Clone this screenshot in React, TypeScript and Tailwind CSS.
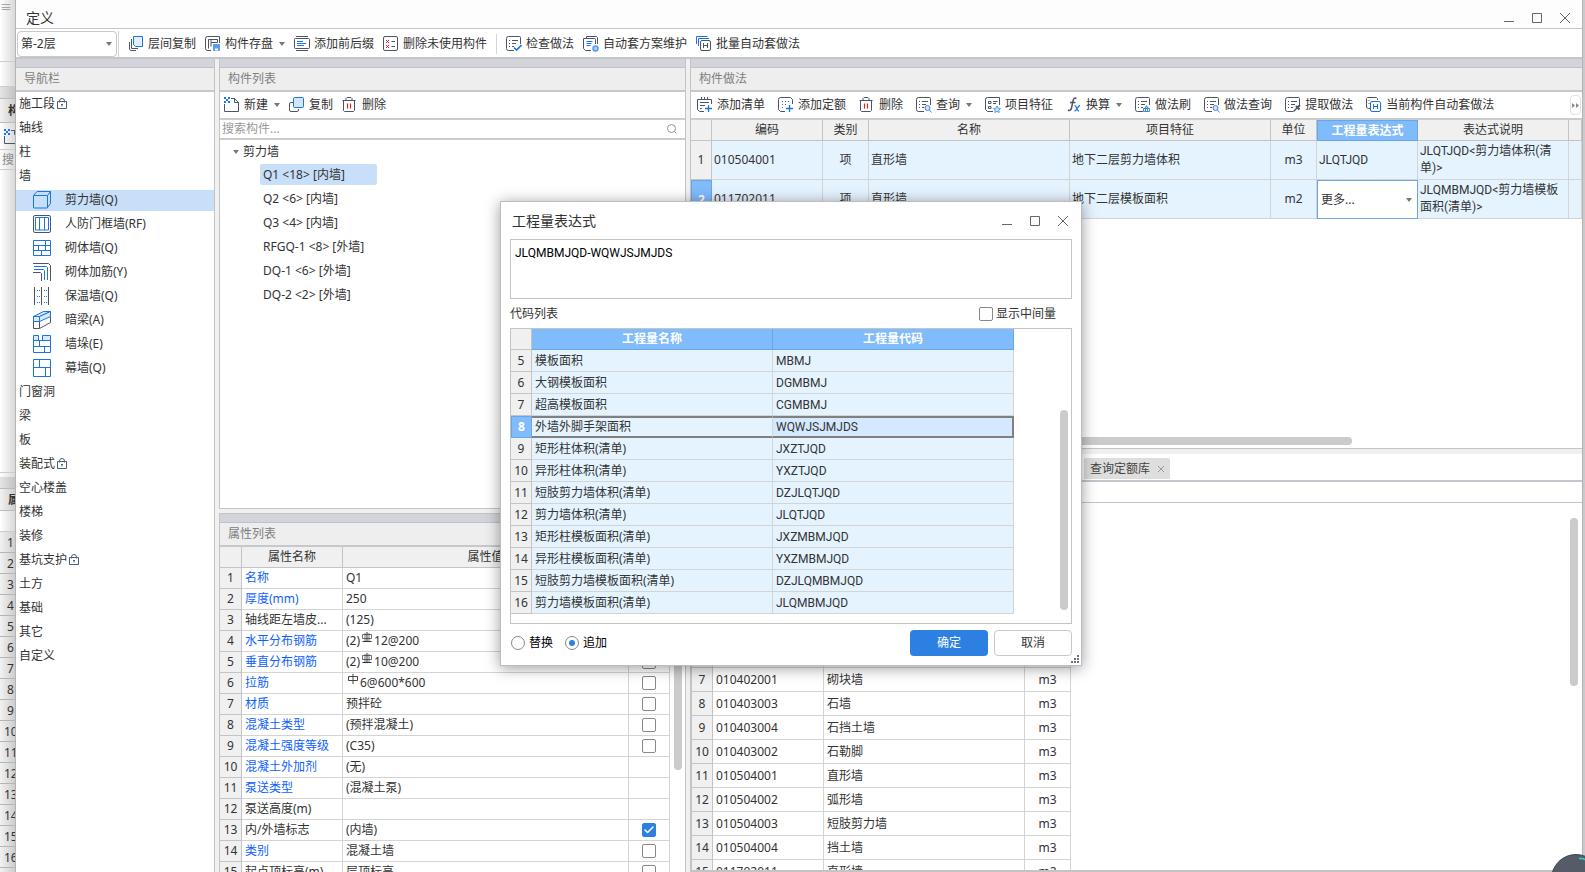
import type { ReactNode } from 'react'
import { Check } from 'lucide-react'

const BLUE = '#1a73e8'
const DARK = '#4b5563'

interface IconProps {
  children: ReactNode
  size?: number
}

function Glyph({ children, size = 16 }: IconProps) {
  return (
    <svg
      width={size}
      height={size}
      viewBox={`0 0 ${size} ${size}`}
      fill="none"
      stroke={DARK}
      strokeWidth={1}
      className="shrink-0"
      aria-hidden="true"
    >
      {children}
    </svg>
  )
}

// sheet with three text rows, shared by most of the "做法" icons
function Sheet({ children }: { children?: ReactNode }) {
  return (
    <Glyph>
      <path d="M8 14.5H2.5a2 2 0 0 1-2-2v-10a2 2 0 0 1 2-2h11a1 1 0 0 1 1 1V8" />
      <path d="M3 4.5h1M6 4.5h6M3 7.5h1M6 7.5h4M3 10.5h1M6 10.5h2" />
      {children}
    </Glyph>
  )
}

const ICONS = {
  layerCopy: (
    <Glyph>
      <path d="M5.5.5h9v10h-7l-2-2z" fill="#e3effd" stroke={BLUE} />
      <path d="M3.5 3v9.5H10M1.5 6v7l1 1.5H8" />
    </Glyph>
  ),
  save: (
    <Glyph>
      <path d="M6 14.5H2.5a2 2 0 0 1-2-2v-10a2 2 0 0 1 2-2h12V7M3.5 12.5v-9H6v3h6.5v-3H6M6 6.5v4" />
      <path d="M8.5 8.5h6v6h-6z" fill="#5b9bf0" stroke="#5b9bf0" />
      <path d="M10 12.5h3v2h-3z" fill="#fff" stroke="none" />
    </Glyph>
  ),
  affix: (
    <Glyph>
      <path d="M2 .5h12M2 14.5h12" />
      <rect x="0.5" y="2.5" width="15" height="10" rx="1" />
      <path d="M3 5.5h6M3 7.5h9M3 9.5h7" stroke={BLUE} />
    </Glyph>
  ),
  removeUnused: (
    <Glyph>
      <rect x="0.5" y="0.5" width="14" height="14" rx="1.5" />
      <path d="m3 4 3 3m0-3L3 7m0 2 3 3m0-3-3 3" stroke="#dc2626" />
      <path d="M8.5 5.5H12M8.5 10.5H12" />
    </Glyph>
  ),
  check: (
    <Sheet>
      <path d="m8 11.5 2.5 2.5 5-5" stroke={BLUE} strokeWidth={1.6} />
    </Sheet>
  ),
  plan: (
    <Glyph>
      <path d="M3.5 2V.5h10l1 1V8M8 14.5H2.5l-2-2v-10h11a1 1 0 0 1 1 1V8" />
      <path d="M3.5 5.5h6M3.5 7.5h5M3.5 9.5h4" stroke={BLUE} />
      <circle cx="12.5" cy="12.5" r="2.5" fill="#a9cbf8" stroke="#5b9bf0" strokeWidth={1.5} />
    </Glyph>
  ),
  batch: (
    <Glyph>
      <path d="M.5 8V.5h11M2.5 10V2.5H13" stroke={BLUE} />
      <rect x="4.5" y="4.5" width="10" height="10" rx="1.5" fill="#fff" />
      <path d="M7.5 7v5M11.5 7v5M7.5 9.5h4" />
    </Glyph>
  ),
  create: (
    <Glyph>
      <path d="M7 1.5h3.5l4 4v9H.5V7M10.5 1.5v4h4" />
      <path d="M0 0h2v2H0zM4 0h2v2H4zM2 2h2v2H2zM0 4h2v2H0zM4 4h2v2H4z" fill={BLUE} stroke="none" />
    </Glyph>
  ),
  copy: (
    <Glyph>
      <path d="M4 5.5H2A1.5 1.5 0 0 0 .5 7v6A1.5 1.5 0 0 0 2 14.5h6A1.5 1.5 0 0 0 9.5 13v-1" />
      <rect x="4.5" y="0.5" width="10" height="10" rx="1" fill="#d4e4fb" stroke={BLUE} />
    </Glyph>
  ),
  trash: (
    <Glyph>
      <path d="M.5 3.5h13M4 3.5v-2l1-1h4l1 1v2M1.5 3.5v10l1 1h9l1-1v-10" />
      <path d="M5.5 6.5v5M8.5 6.5v5" stroke="#dc2626" strokeWidth={1.2} />
    </Glyph>
  ),
  addList: (
    <Glyph>
      <path d="M7 14.5H2.5l-2-2v-10h14V7M4.5 0v3M7.5 0v3M10.5 0v3M3 5.5h9M3 8.5h5M3 11.5h2" />
      <path d="M11.5 8v7M8 11.5h7" stroke={BLUE} strokeWidth={1.3} />
    </Glyph>
  ),
  addQuota: (
    <Glyph>
      <path d="M7 14.5H2.5l-2-2v-10a2 2 0 0 1 2-2h10l2 2V7" />
      <path d="M4 4.5h8M4 7.5h5M4 10.5h3" stroke={BLUE} strokeDasharray="1 2" />
      <path d="M11.5 8v7M8 11.5h7" stroke={BLUE} strokeWidth={1.3} />
    </Glyph>
  ),
  query: (
    <Sheet>
      <circle cx="11.5" cy="11" r="2.5" fill="#d4e4fb" stroke="#3b86ea" />
      <path d="m13.5 13 2 2.5" stroke="#3b86ea" />
    </Sheet>
  ),
  feature: (
    <Glyph>
      <path d="M8 14.5H2.5l-2-2v-10a2 2 0 0 1 2-2h12V8M3.500 4.500H6v2H3.500zM8 4.500h4.500M8 6.500h3M3.500 9.500H6v2H3.500z" />
      <path d="m12 9 1.200 2.200 2.300.3-1.700 1.600.4 2.400-2.200-1.100-2.200 1.100.4-2.400-1.700-1.600 2.300-.3z" fill="#c5dcfa" stroke="#5b9bf0" />
    </Glyph>
  ),
  convert: (
    <Glyph>
      <path d="M10.5 1.5c-2-1.200-3 .2-3.500 2.500l-1.500 7c-.5 2.200-1.700 3-3.500 2M4 5.500h5.500" strokeWidth={1.500} />
      <path d="M8.500 9c2-1 2 5 4.500 5m1-5.500c-2 0-3 5.500-5.500 5.500" stroke={BLUE} strokeWidth={1.300} />
    </Glyph>
  ),
  brush: (
    <Sheet>
      <path d="M8.500 11.500h6v3h-6zM10 11.500v-1h1V9h1v1.500h1v1M10.500 12v2.500M12.500 12v2.500" stroke="#3b86ea" />
    </Sheet>
  ),
  extract: (
    <Sheet>
      <path d="m8.500 14.500 4-4" strokeWidth={1.500} />
      <path d="m11 9 3.500 3.500M12.500 10.500l2.500-2.500" strokeWidth={2} />
    </Sheet>
  ),
  current: (
    <Glyph>
      <path d="M4 11.500H2.500l-2-1v-9l1-1h9l1 1V3M2.500 3.500h1M2.500 6.500h1" />
      <rect x="4.500" y="4.500" width="10" height="10" rx="1.500" fill="#fff" stroke={BLUE} />
      <path d="M7.500 7v5M11.500 7v5M7.500 9.500h4" stroke={BLUE} />
    </Glyph>
  ),
}

const WALL_ICONS = {
  shear: (
    <Glyph size={18}>
      <path d="M.5 4.500 4 .500h13.500v12l-3 4M14.500 4.500l3-4" stroke={BLUE} />
      <rect x="0.500" y="4.500" width="14" height="12.500" rx="0.500" stroke={BLUE} />
    </Glyph>
  ),
  frame: (
    <Glyph size={18}>
      <rect x="0.500" y="0.500" width="17" height="17" rx="1.500" />
      <path d="M2.500 2.500h13v12.500h-13zM6.500 2.500V15M11.500 2.500V15" stroke={BLUE} />
    </Glyph>
  ),
  brick: (
    <Glyph size={18}>
      <path d="M.500 1.500h17v15H.500zM.500 6.500h17M.500 11.500h17M12.500 1.500v5M5.500 6.500v5M12.500 6.500v5M8.500 11.500v5" stroke={BLUE} />
    </Glyph>
  ),
  rebar: (
    <Glyph size={18}>
      <path d="M0 .500h15.500l2 2V18M0 9.500h7.500l1 1V18" />
      <path d="M1 3.500h12.500l1 1V17M1 6.500h9.500l1 1V17" stroke={BLUE} />
    </Glyph>
  ),
  insulate: (
    <Glyph size={18}>
      <path d="M1.500 0v18M8.500 0v18M15.500 0v18" />
      <path d="M4 3.500h3M11 3.500h3M4 9.500h3M11 9.500h3M4 15.500h3M11 15.500h3" stroke={BLUE} strokeDasharray="1 1" />
    </Glyph>
  ),
  beam: (
    <Glyph size={18}>
      <path d="m.500 5.500 10-5h7l-11 5z" fill="#dbe9fc" stroke={BLUE} />
      <path d="M.500 5.500h6v5h-6zM6.500 5.500l11-5v5l-11 5" fill="#dbe9fc" stroke={BLUE} />
      <path d="M.500 10.500v7h6v-7M6.500 17.500l11-6v-6" />
    </Glyph>
  ),
  pier: (
    <Glyph size={18}>
      <path d="M.500.500h5v5h-5zM9.500.500h8v5h-8z" fill="#dbe9fc" stroke={BLUE} />
      <path d="M.500 5.500h17v12H.500zM.500 11.500h17M6.500 5.500v6M11.500 11.500v6" stroke={BLUE} />
    </Glyph>
  ),
  curtain: (
    <Glyph size={18}>
      <path d="M.500.500h17v17H.500zM.500 8.500h17M6.500.500v8M12.500 8.500v9" stroke={BLUE} />
    </Glyph>
  ),
}

function Caret() {
  return (
    <svg width="6" height="4" viewBox="0 0 6 4" className="shrink-0" aria-hidden="true">
      <path d="M0 0h6L3 4z" fill="#777" />
    </svg>
  )
}

function LockIcon() {
  return (
    <svg width="10" height="12" viewBox="0 0 10 12" fill="none" stroke="#4b5f80" className="shrink-0" aria-hidden="true">
      <path d="M2.500 4.500V3a2.500 2.500 0 0 1 5 0v1.500M.500 3.500h9v7h-9z" />
      <path d="M5 6v2.500M4 6.500h2" />
    </svg>
  )
}

// steel grade marks: ribbed bar has the foot lines, plain bar does not
function BarMark({ ribbed }: { ribbed: boolean }) {
  return (
    <svg width="10" height="12" viewBox="0 0 10 12" fill="none" stroke="#333" className="mx-0.5 shrink-0 self-start" aria-hidden="true">
      {ribbed ? (
        <>
          <path d="M5 1v10M.5 10.500h9" />
          <path d="M.5 3.500h9v4h-9zM3 2v8M7 2v8" strokeWidth={0.7} />
        </>
      ) : (
        <path d="M.5 3.500h9v4h-9zM5 1v10" strokeWidth={0.900} />
      )}
    </svg>
  )
}

function Tool({ icon, label, menu }: { icon: keyof typeof ICONS; label: string; menu?: boolean }) {
  return (
    <button type="button" className="flex shrink-0 items-center gap-1 whitespace-nowrap">
      {ICONS[icon]}
      <span>{label}</span>
      {menu && (
        <span className="pl-0.5">
          <Caret />
        </span>
      )}
    </button>
  )
}

function WindowButtons() {
  return (
    <div className="flex items-center gap-[18px] text-[#666]">
      {[
        { name: '最小化', d: 'M0 8.5h10' },
        { name: '最大化', d: 'M.5.5h9v9h-9z' },
        { name: '关闭', d: 'm0 0 10 10M10 0 0 10' },
      ].map((b) => (
        <button key={b.name} type="button" aria-label={b.name}>
          <svg width="10" height="10" viewBox="0 0 10 10" fill="none" stroke="currentColor">
            <path d={b.d} />
          </svg>
        </button>
      ))}
    </div>
  )
}

function PanelTitle({ children }: { children: ReactNode }) {
  return (
    <div className="shrink-0">
      <div className="h-[9px] border-b border-[#bfc2c8] bg-[#d2d4da]" />
      <h2 className="h-6 border-b-2 border-[#c6c8cd] bg-[#eeeeee] pl-2 leading-[22px] text-[#808080]">{children}</h2>
    </div>
  )
}

function Tick({ checked, label }: { checked?: boolean; label: string }) {
  return (
    <span className="inline-grid place-items-center align-middle">
      <input
        type="checkbox"
        defaultChecked={checked}
        aria-label={label}
        className="col-start-1 row-start-1 size-3.5 appearance-none rounded-xs border border-[#888] bg-white checked:border-[#2b80e2] checked:bg-[#2b80e2]"
      />
      {checked && <Check size={12} strokeWidth={3} className="pointer-events-none col-start-1 row-start-1 text-white" />}
    </span>
  )
}

// quantity codes are set in a face whose J stays on the baseline
const CODE_FONT = "font-['Roboto','Noto_Sans_CJK_SC',sans-serif]"

const TH = 'border-r border-b border-[#c4c4c4] bg-[#f0f0f0] p-0 text-center font-normal'
const TD = 'overflow-hidden border-r border-b border-[#d4d4d4] px-[3px] py-0 whitespace-nowrap'
const ROW_NO = 'border-r border-b border-[#c4c4c4] bg-[#f0f0f0] p-0 text-center font-normal'
const ROW_NO_ON = 'border border-[#6aa5e8] bg-[#80bbfb] p-0 text-center font-bold text-white'

const WALLS: { icon: keyof typeof WALL_ICONS; name: string }[] = [
  { icon: 'shear', name: '剪力墙(Q)' },
  { icon: 'frame', name: '人防门框墙(RF)' },
  { icon: 'brick', name: '砌体墙(Q)' },
  { icon: 'rebar', name: '砌体加筋(Y)' },
  { icon: 'insulate', name: '保温墙(Q)' },
  { icon: 'beam', name: '暗梁(A)' },
  { icon: 'pier', name: '墙垛(E)' },
  { icon: 'curtain', name: '幕墙(Q)' },
]

const NAV_TOP = ['施工段', '轴线', '柱', '墙']
const NAV_BOTTOM = ['门窗洞', '梁', '板', '装配式', '空心楼盖', '楼梯', '装修', '基坑支护', '土方', '基础', '其它', '自定义']
const LOCKED = ['施工段', '装配式', '基坑支护']

const COMPONENTS = ['Q1 <18> [内墙]', 'Q2 <6> [内墙]', 'Q3 <4> [内墙]', 'RFGQ-1 <8> [外墙]', 'DQ-1 <6> [外墙]', 'DQ-2 <2> [外墙]']

interface Prop {
  name: string
  value: string
  link?: boolean
  bar?: 'ribbed' | 'plain'
  prefix?: string
  tick?: boolean
}

const PROPS: Prop[] = [
  { name: '名称', value: 'Q1', link: true },
  { name: '厚度(mm)', value: '250', link: true },
  { name: '轴线距左墙皮...', value: '(125)' },
  { name: '水平分布钢筋', prefix: '(2)', bar: 'ribbed', value: '12@200', link: true, tick: false },
  { name: '垂直分布钢筋', prefix: '(2)', bar: 'ribbed', value: '10@200', link: true, tick: false },
  { name: '拉筋', bar: 'plain', value: '6@600*600', link: true, tick: false },
  { name: '材质', value: '预拌砼', link: true, tick: false },
  { name: '混凝土类型', value: '(预拌混凝土)', link: true, tick: false },
  { name: '混凝土强度等级', value: '(C35)', link: true, tick: false },
  { name: '混凝土外加剂', value: '(无)', link: true },
  { name: '泵送类型', value: '(混凝土泵)', link: true },
  { name: '泵送高度(m)', value: '' },
  { name: '内/外墙标志', value: '(内墙)', tick: true },
  { name: '类别', value: '混凝土墙', link: true, tick: false },
  { name: '起点顶标高(m)', value: '层顶标高', tick: false },
]

const CODES = [
  [5, '模板面积', 'MBMJ'],
  [6, '大钢模板面积', 'DGMBMJ'],
  [7, '超高模板面积', 'CGMBMJ'],
  [8, '外墙外脚手架面积', 'WQWJSJMJDS'],
  [9, '矩形柱体积(清单)', 'JXZTJQD'],
  [10, '异形柱体积(清单)', 'YXZTJQD'],
  [11, '短肢剪力墙体积(清单)', 'DZJLQTJQD'],
  [12, '剪力墙体积(清单)', 'JLQTJQD'],
  [13, '矩形柱模板面积(清单)', 'JXZMBMJQD'],
  [14, '异形柱模板面积(清单)', 'YXZMBMJQD'],
  [15, '短肢剪力墙模板面积(清单)', 'DZJLQMBMJQD'],
  [16, '剪力墙模板面积(清单)', 'JLQMBMJQD'],
] as const

const LIBRARY = [
  ['', '', ''],
  ['', '', ''],
  ['', '', ''],
  ['', '', ''],
  ['', '', ''],
  ['', '', ''],
  ['010402001', '砌块墙', 'm3'],
  ['010403003', '石墙', 'm3'],
  ['010403004', '石挡土墙', 'm3'],
  ['010403002', '石勒脚', 'm3'],
  ['010504001', '直形墙', 'm3'],
  ['010504002', '弧形墙', 'm3'],
  ['010504003', '短肢剪力墙', 'm3'],
  ['010504004', '挡土墙', 'm3'],
  ['011702011', '直形墙', 'm2'],
]

// sliver of the main window that shows left of this one
function BackWindow() {
  return (
    <div
      className="flex w-[15px] shrink-0 flex-col overflow-hidden bg-linear-to-r from-white to-[#d9d9d9] *:shrink-0"
      aria-hidden="true"
    >
      <div className="h-[62px] border-b border-[#ccc] text-[#999]">≡</div>
      <div className="h-[25px] border-b border-[#ccc]" />
      <div className="h-3 border-b border-[#bbb] bg-black/10" />
      <div className="h-6 border-b border-[#bbb] bg-black/5 pl-2 leading-6 font-bold whitespace-nowrap">构</div>
      <div className="h-[27px] border-b border-[#ccc] pt-1.5 pl-1">{ICONS.create}</div>
      <div className="h-5 border-b border-[#ccc] pl-0.5 leading-5 whitespace-nowrap text-[#888]">搜</div>
      <div className="h-[303px] border-b border-[#ccc]" />
      <div className="h-1" />
      <div className="h-3 border-b border-[#bbb] bg-black/10" />
      <div className="h-[22px] border-b border-[#bbb] bg-black/5 pl-2 leading-[22px] font-bold whitespace-nowrap">属</div>
      <div className="h-[21px] border-b border-[#ccc]" />
      {Array.from({ length: 17 }, (_, i) => (
        <div
          key={i}
          className={`h-[21px] border-b border-[#b5b5b5] bg-black/5 leading-[22px] ${i < 9 ? 'pl-[7px]' : 'pl-1'}`}
        >
          {i + 1}
        </div>
      ))}
    </div>
  )
}

function NavItem({ name }: { name: string }) {
  return (
    <li className="flex h-6 items-center gap-0.5 pl-[3px]">
      {name}
      {LOCKED.includes(name) && <LockIcon />}
    </li>
  )
}

function NavPanel() {
  return (
    <nav className="flex w-[199px] shrink-0 flex-col border-r border-[#c4c4c4] bg-white">
      <PanelTitle>导航栏</PanelTitle>
      <ul>
        {NAV_TOP.map((n) => (
          <NavItem key={n} name={n} />
        ))}
        {WALLS.map((w, i) => (
          <li key={w.name} className="flex h-6 items-center">
            <div className={`flex h-[21px] w-full items-center gap-3.5 pl-[17px] ${i === 0 ? 'bg-[#c8dff9]' : ''}`}>
              {WALL_ICONS[w.icon]}
              {w.name}
            </div>
          </li>
        ))}
        {NAV_BOTTOM.map((n) => (
          <NavItem key={n} name={n} />
        ))}
      </ul>
    </nav>
  )
}

function PropertyTable() {
  return (
    <div className="flex min-h-0 flex-1 justify-between overflow-hidden">
      <table className="w-[450px] table-fixed border-separate border-spacing-0 self-start">
        <colgroup>
          <col className="w-[22px]" />
          <col className="w-[101px]" />
          <col className="w-[286px]" />
          <col className="w-[41px]" />
        </colgroup>
        <thead>
          <tr className="h-[21px]">
            <th className={TH} />
            <th className={TH}>属性名称</th>
            <th className={TH}>属性值</th>
            <th className={TH} />
          </tr>
        </thead>
        <tbody>
          {PROPS.map((p, i) => (
            <tr key={p.name} className="h-[21px] leading-5">
              <th className={ROW_NO}>{i + 1}</th>
              <td className={`${TD} ${p.link ? 'text-[#0f5fff]' : ''}`}>{p.name}</td>
              <td className={TD}>
                <div className="flex h-5 items-center">
                  {p.prefix}
                  {p.bar && <BarMark ribbed={p.bar === 'ribbed'} />}
                  {p.value}
                </div>
              </td>
              <td className={`${TD} text-center leading-none`}>
                {p.tick !== undefined && <Tick checked={p.tick} label={p.name} />}
              </td>
            </tr>
          ))}
        </tbody>
      </table>
      <div className="flex w-[11px] flex-col">
        <div className="h-[223px] w-2 rounded-full bg-[#cbcbcb]" />
      </div>
    </div>
  )
}

function ComponentPanel() {
  return (
    <div className="flex w-[467px] shrink-0 flex-col">
      <section className="flex min-h-0 flex-1 flex-col border-x border-b border-[#c4c4c4] bg-white">
        <PanelTitle>构件列表</PanelTitle>
        <div className="flex h-7 shrink-0 items-center gap-[9px] border-b-2 border-[#ccc] pl-1">
          <Tool icon="create" label="新建" menu />
          <Tool icon="copy" label="复制" />
          <Tool icon="trash" label="删除" />
        </div>
        <div className="flex h-5 shrink-0 items-center border-b-2 border-[#ccc] pr-2">
          <input
            type="text"
            placeholder="搜索构件..."
            aria-label="搜索构件"
            className="min-w-0 flex-1 pl-0.5 leading-4 outline-none placeholder:text-[#999]"
          />
          <svg width="10" height="10" viewBox="0 0 10 10" fill="none" stroke="#999" aria-hidden="true">
            <circle cx="4.5" cy="4.5" r="4" />
            <path d="m7.5 7.5 2 2" />
          </svg>
        </div>
        <div>
          <div className="flex h-6 items-center gap-1 pl-[13px]">
            <Caret />
            剪力墙
          </div>
          <ul>
            {COMPONENTS.map((c, i) => (
              <li key={c} className="flex h-6 pl-10 whitespace-pre">
                <span className={`h-[21px] w-[117px] rounded-xs pl-[3px] leading-[21px] ${i === 0 ? 'bg-[#c8dff9]' : ''}`}>
                  {c}
                </span>
              </li>
            ))}
          </ul>
        </div>
      </section>
      <section className="mt-1 flex h-[359px] shrink-0 flex-col border-x border-t border-[#c4c4c4] bg-white">
        <PanelTitle>属性列表</PanelTitle>
        <PropertyTable />
      </section>
    </div>
  )
}

const METHOD_ROWS = [
  { code: '010504001', feature: '地下二层剪力墙体积', unit: 'm3', note: 'JLQTJQD<剪力墙体积(清\n单)>' },
  { code: '011702011', feature: '地下二层模板面积', unit: 'm2', note: 'JLQMBMJQD<剪力墙模板\n面积(清单)>' },
]

function MethodTable() {
  const cell = 'overflow-hidden border-r border-b border-[#d4d4d4] px-0.5 py-0 whitespace-nowrap'
  return (
    <table className="w-full table-fixed border-separate border-spacing-0">
      <colgroup>
        <col className="w-[21px]" />
        <col className="w-[111px]" />
        <col className="w-[46px]" />
        <col className="w-[201px]" />
        <col className="w-[201px]" />
        <col className="w-[46px]" />
        <col className="w-[101px]" />
        <col className="w-[151px]" />
        <col />
      </colgroup>
      <thead>
        <tr className="h-[21px]">
          <th className={TH} />
          <th className={TH}>编码</th>
          <th className={TH}>类别</th>
          <th className={TH}>名称</th>
          <th className={TH}>项目特征</th>
          <th className={TH}>单位</th>
          <th className="border border-[#6aa5e8] bg-[#80bbfb] p-0 text-center font-bold text-white">工程量表达式</th>
          <th className={TH}>表达式说明</th>
          <th className={TH} />
        </tr>
      </thead>
      <tbody>
        {METHOD_ROWS.map((r, i) => (
          <tr key={r.code} className="h-[39px] bg-[#e5f3ff]">
            <th className={i === 1 ? ROW_NO_ON : ROW_NO}>{i + 1}</th>
            <td className={cell}>{r.code}</td>
            <td className={`${cell} text-center`}>项</td>
            <td className={cell}>直形墙</td>
            <td className={cell}>{r.feature}</td>
            <td className={`${cell} text-center`}>{r.unit}</td>
            {i === 0 ? (
              <td className={`${cell} ${CODE_FONT}`}>JLQTJQD</td>
            ) : (
              <td className="border border-[#6aa5e8] bg-white p-0">
                <span className="grid items-center">
                  <select aria-label="工程量表达式" className="col-start-1 row-start-1 h-9 w-full appearance-none pl-[3px] outline-none">
                    <option>更多...</option>
                  </select>
                  <span className="pointer-events-none col-start-1 row-start-1 justify-self-end pr-[5px]">
                    <Caret />
                  </span>
                </span>
              </td>
            )}
            <td className={`overflow-hidden border-r border-b border-[#d4d4d4] px-0.5 py-0 leading-[17px] whitespace-pre ${CODE_FONT}`}>
              {r.note}
            </td>
            <td className={cell} />
          </tr>
        ))}
      </tbody>
    </table>
  )
}

function LibraryTable() {
  return (
    <table className="w-[380px] table-fixed border-separate border-spacing-0 self-start border-l border-[#c4c4c4]">
      <colgroup>
        <col className="w-[21px]" />
        <col className="w-[111px]" />
        <col className="w-[201px]" />
        <col className="w-[46px]" />
      </colgroup>
      <thead>
        <tr className="h-[21px]">
          <th className={TH} />
          <th className={TH} />
          <th className={TH} />
          <th className={TH} />
        </tr>
      </thead>
      <tbody>
        {LIBRARY.map(([code, name, unit], i) => (
          <tr key={i} className="h-6">
            <th className={ROW_NO}>{i + 1}</th>
            <td className={TD}>{code}</td>
            <td className={TD}>{name}</td>
            <td className={`${TD} text-center`}>{unit}</td>
          </tr>
        ))}
      </tbody>
    </table>
  )
}

function MethodPanel() {
  return (
    <div className="flex min-w-0 flex-1 flex-col border-l border-[#c4c4c4]">
      <section className="flex min-h-0 flex-1 flex-col border-b border-[#c4c4c4] bg-white">
        <PanelTitle>构件做法</PanelTitle>
        <div className="flex h-7 shrink-0 items-center gap-[13px] overflow-hidden border-b-2 border-[#ccc] pl-1.5">
          <Tool icon="addList" label="添加清单" />
          <Tool icon="addQuota" label="添加定额" />
          <Tool icon="trash" label="删除" />
          <Tool icon="query" label="查询" menu />
          <Tool icon="feature" label="项目特征" />
          <Tool icon="convert" label="换算" menu />
          <Tool icon="brush" label="做法刷" />
          <Tool icon="query" label="做法查询" />
          <Tool icon="extract" label="提取做法" />
          <Tool icon="current" label="当前构件自动套做法" />
          <button type="button" aria-label="更多工具" className="mr-px ml-auto flex h-5 w-[11px] items-center justify-center rounded-sm border border-[#e2e2e2]">
            <svg width="7" height="5" viewBox="0 0 7 5" fill="#888" aria-hidden="true">
              <path d="m0 0 3 2.5L0 5zM4 0l3 2.5L4 5z" />
            </svg>
          </button>
        </div>
        <div className="flex-1 overflow-hidden">
          <MethodTable />
        </div>
        <div className="mb-[3px] h-2 w-[661px] rounded-full bg-[#cbcbcb]" />
      </section>
      <section className="mt-[5px] flex h-[418px] shrink-0 flex-col border-b-2 border-[#c4c4c4] bg-white">
        <div className="flex h-7 shrink-0 items-end border-b-2 border-[#c3c7cd] pb-px pl-[393px]">
          <div className="flex h-[21px] w-[86px] items-center justify-between rounded-t-xs bg-[#dedede] px-1.5 text-[#444]">
            查询定额库
            <button type="button" aria-label="关闭标签">
              <svg width="6" height="6" viewBox="0 0 6 6" stroke="#999" aria-hidden="true">
                <path d="m0 0 6 6M6 0 0 6" />
              </svg>
            </button>
          </div>
        </div>
        <div className="h-[21px] shrink-0 border-b border-[#c4c4c4]" />
        <div className="flex min-h-0 flex-1 justify-between overflow-hidden">
          <LibraryTable />
          <div className="w-3 pt-[15px]">
            <div className="h-[168px] w-2 rounded-full bg-[#cbcbcb]" />
          </div>
        </div>
      </section>
    </div>
  )
}

function CodeTable() {
  const head = 'border-r border-b border-[#6aa5e8] bg-[#80bbfb] p-0 text-center font-bold text-white'
  return (
    <table className="w-[503px] table-fixed border-separate border-spacing-0 self-start">
      <colgroup>
        <col className="w-[21px]" />
        <col className="w-[241px]" />
        <col className="w-[241px]" />
      </colgroup>
      <thead>
        <tr className="h-[21px]">
          <th className={TH} />
          <th className={head}>工程量名称</th>
          <th className={head}>工程量代码</th>
        </tr>
      </thead>
      <tbody>
        {CODES.map(([no, name, code]) => {
          const on = no === 8
          return (
            <tr key={no} className="h-[22px] bg-[#e5f3ff] leading-5">
              <th className={on ? ROW_NO_ON : ROW_NO}>{no}</th>
              <td className={on ? 'border-y-2 border-r border-y-[#808080] border-r-[#d4d4d4] px-[3px] py-0 leading-[18px]' : TD}>
                {name}
              </td>
              <td
                className={`${CODE_FONT} ${on ? 'border-y-2 border-r-2 border-[#808080] bg-[#d4e9ff] px-[3px] py-0 leading-[18px]' : TD}`}
              >
                {code}
              </td>
            </tr>
          )
        })}
      </tbody>
    </table>
  )
}

function ExpressionDialog() {
  const radio =
    "grid size-3.5 appearance-none place-items-center rounded-full border border-[#888] bg-white checked:before:size-1.5 checked:before:rounded-full checked:before:bg-[#2b80e2] checked:before:content-['']"
  return (
    <div
      role="dialog"
      aria-label="工程量表达式"
      className="absolute top-[201px] left-[500px] flex w-[582px] flex-col border border-[#bdbdbd] bg-white px-[9px] pb-[9px] shadow-[0_2px_14px_rgba(0,0,0,0.4)]"
    >
      <header className="flex h-[37px] items-center justify-between pr-1 pl-0.5">
        <h2 className="text-sm">工程量表达式</h2>
        <WindowButtons />
      </header>
      <textarea
        aria-label="表达式"
        defaultValue="JLQMBMJQD-WQWJSJMJDS"
        className={`block h-[60px] w-full resize-none border border-[#c4c4c4] px-1 py-[5px] leading-4 text-black outline-none ${CODE_FONT}`}
      />
      <div className="flex h-[29px] items-center justify-between pr-4">
        <span>代码列表</span>
        <label className="flex items-center gap-[3px]">
          <Tick label="显示中间量" />
          显示中间量
        </label>
      </div>
      <div className="flex justify-between border border-[#c4c4c4] pb-[9px]">
        <CodeTable />
        <div className="w-[11px] pt-[81px]">
          <div className="h-[200px] w-2 rounded-full bg-[#cbcbcb]" />
        </div>
      </div>
      <footer className="flex items-center pt-1.5 pl-px text-black">
        <label className="flex items-center gap-1">
          <input type="radio" name="mode" className={radio} />
          替换
        </label>
        <label className="ml-3 flex items-center gap-1">
          <input type="radio" name="mode" defaultChecked className={radio} />
          追加
        </label>
        <button type="button" className="mr-1.5 ml-auto h-[26px] w-[78px] rounded-sm bg-[#2b80e2] text-white">
          确定
        </button>
        <button type="button" className="h-[26px] w-[78px] rounded-sm border border-[#c8c8c8] bg-white text-[#333]">
          取消
        </button>
      </footer>
      <svg width="8" height="8" viewBox="0 0 8 8" fill="#6b7280" className="absolute right-0.5 bottom-0.5" aria-hidden="true">
        <path d="M6 0h2v2H6zM6 3h2v2H6zM3 3h2v2H3zM6 6h2v2H6zM3 6h2v2H3zM0 6h2v2H0z" />
      </svg>
    </div>
  )
}

export default function App() {
  return (
    <div className="relative flex h-screen overflow-hidden bg-[#c9cacc] font-['Noto_Sans','Noto_Sans_CJK_SC',sans-serif] text-xs leading-4 text-[#333]">
      <BackWindow />
      <main className="flex min-w-0 flex-1 flex-col border-x border-[#b4b4b4] bg-[#f0f0f0]">
        <header className="flex h-[29px] shrink-0 items-center justify-between border-b border-[#c4c6ca] bg-[#fdfdfd] pt-2 pr-3 pl-2.5">
          <h1 className="text-sm">定义</h1>
          <WindowButtons />
        </header>
        <div className="flex h-[30px] shrink-0 items-center gap-[9px] border-b-2 border-[#c4c6ca] bg-white pt-0.5">
          <div className="flex items-center border-r border-[#d4d4d4] px-px">
            <span className="grid w-[100px] items-center">
              <select aria-label="楼层" className="col-start-1 row-start-1 h-[26px] w-full appearance-none rounded-sm border border-[#c8c8c8] bg-white pl-[3px] outline-none">
                <option>第-2层</option>
              </select>
              <span className="pointer-events-none col-start-1 row-start-1 justify-self-end pr-[5px]">
                <Caret />
              </span>
            </span>
          </div>
          <Tool icon="layerCopy" label="层间复制" />
          <Tool icon="save" label="构件存盘" menu />
          <Tool icon="affix" label="添加前后缀" />
          <Tool icon="removeUnused" label="删除未使用构件" />
          <div className="h-5 w-px bg-[#d4d4d4]" />
          <Tool icon="check" label="检查做法" />
          <Tool icon="plan" label="自动套方案维护" />
          <Tool icon="batch" label="批量自动套做法" />
        </div>
        <div className="flex min-h-0 flex-1 gap-1">
          <NavPanel />
          <ComponentPanel />
          <MethodPanel />
        </div>
      </main>
      <div className="w-0.5 shrink-0" />
      <ExpressionDialog />
      {/* floating assistant ball, mostly off the corner */}
      <svg width="34" height="18" viewBox="0 0 34 18" className="absolute right-0 bottom-0" aria-hidden="true">
        <circle cx="25" cy="25" r="24.5" fill="#565b68" stroke="#3f434e" />
        <path d="M28 4.5h3l3 1" stroke="#2dd4d4" strokeWidth="1.5" fill="none" />
      </svg>
    </div>
  )
}
